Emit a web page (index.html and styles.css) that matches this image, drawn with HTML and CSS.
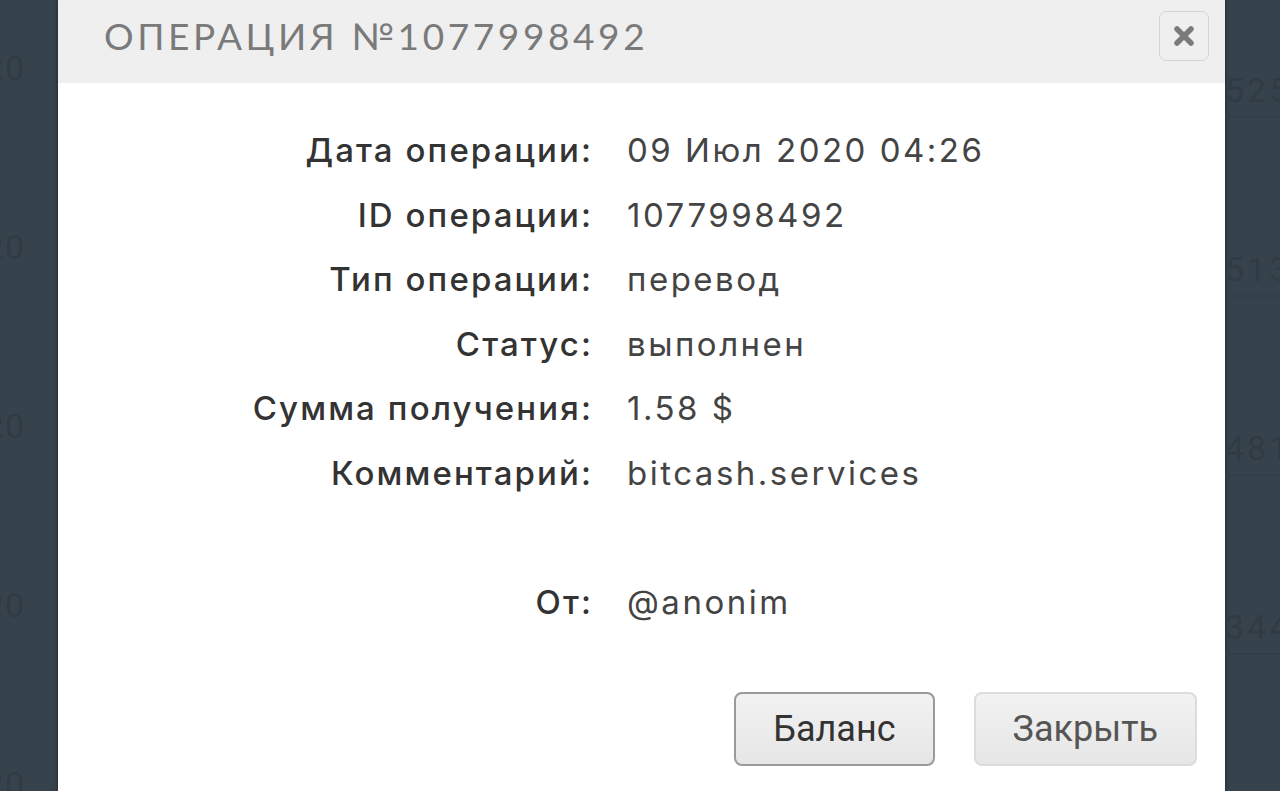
FILE: index.html
```html
<!DOCTYPE html>
<html lang="ru">
<head>
  <meta charset="UTF-8">
  <title>Операция №1077998492</title>
  <link rel="stylesheet" href="styles.css">
</head>
<body>
  <div class="page">
    <!-- фон слева -->
    <div class="bg-col bg-left">
      <div class="bg-cell"><span>2020</span></div>
      <div class="bg-cell"><span>2020</span></div>
      <div class="bg-cell"><span>2020</span></div>
      <div class="bg-cell"><span>2020</span></div>
      <div class="bg-cell"><span>2020</span></div>
    </div>

    <!-- окно операции -->
    <div class="modal">
      <div class="modal-head">
        <h2 class="modal-title">ОПЕРАЦИЯ №1077998492</h2>
        <button class="modal-x" aria-label="Закрыть">
          <svg width="24" height="24" viewBox="0 0 24 24">
            <path d="M5 5 L19 19 M19 5 L5 19" stroke="#7b7b7b" stroke-width="5.5" stroke-linecap="round"/>
          </svg>
        </button>
      </div>
      <div class="modal-body">
        <dl class="info">
          <dt>Дата операции:</dt><dd>09 Июл 2020 04:26</dd>
          <dt>ID операции:</dt><dd>1077998492</dd>
          <dt>Тип операции:</dt><dd>перевод</dd>
          <dt>Статус:</dt><dd>выполнен</dd>
          <dt>Сумма получения:</dt><dd>1.58 $</dd>
          <dt>Комментарий:</dt><dd>bitcash.services</dd>
          <dt class="gap">От:</dt><dd class="gap">@anonim</dd>
        </dl>
        <div class="actions">
          <button class="btn btn-focus">Баланс</button>
          <button class="btn">Закрыть</button>
        </div>
      </div>
    </div>

    <!-- фон справа -->
    <div class="bg-col bg-right">
      <div class="bg-cell"><span>525</span></div>
      <div class="bg-cell"><span>513</span></div>
      <div class="bg-cell"><span>481</span></div>
      <div class="bg-cell"><span>344</span></div>
      <div class="bg-cell"><span>200</span></div>
    </div>
  </div>
</body>
</html>
```

FILE: styles.css
```css
body { margin: 0; background: #37434c; overflow: hidden; }
.page { display: grid; grid-template-columns: 58px 1167px 1fr; height: 791px; }

/* фон за окном */
.bg-col { overflow: hidden; font-family: 'Roboto', 'Liberation Sans', sans-serif; color: #303b43; font-size: 34px; }
.bg-left { padding-top: 48px; }
.bg-left .bg-cell { height: 179px; display: flex; justify-content: flex-end; padding-right: 33px; letter-spacing: 1px; white-space: nowrap; }
.bg-right { padding-top: 70px; }
.bg-right .bg-cell { height: 179px; white-space: nowrap; }
.bg-right span { display: inline-block; border-bottom: 2px dotted #313c44; padding-bottom: 6px; letter-spacing: 3px; }

/* окно */
.modal { background: #fff; box-shadow: 0 0 4px rgba(0,0,0,0.5); display: flex; flex-direction: column; }
.modal-head { background: #efefef; height: 83px; display: flex; align-items: center; justify-content: space-between; padding: 0 16px 0 46px; }
.modal-title { margin: 0; font-family: 'Lato', 'Noto Sans', sans-serif; font-weight: 400; font-size: 37px; letter-spacing: 3.6px; color: #7a7a7a; position: relative; top: -6px; }
.modal-x { width: 50px; height: 50px; border: 1px solid #d4d4d4; border-radius: 7px; background: #efefef; display: flex; align-items: center; justify-content: center; padding: 0; position: relative; top: -6px; }

.modal-body { padding: 35px 28px 0 0; }
.info { display: grid; grid-template-columns: 535px 1fr; column-gap: 34px; margin: 0; font-family: 'Inter', 'Noto Sans', sans-serif; font-size: 33px; line-height: 64.6px; }
.info dt { text-align: right; font-weight: 500; color: #333; letter-spacing: 2.1px; }
.info dd { margin: 0; color: #444; letter-spacing: 2.5px; }
.info .gap { margin-top: 64px; }

.actions { display: flex; justify-content: flex-end; gap: 39px; margin-top: 58px; }
.btn { height: 74px; padding: 0 37px; font-family: 'Roboto', 'Liberation Sans', sans-serif; font-size: 36px; color: #555; border: 2px solid #dcdcdc; border-radius: 8px; background: linear-gradient(#f2f2f2, #e6e6e6); }
.btn-focus { color: #333; border-color: #9a9a9a; }
```
